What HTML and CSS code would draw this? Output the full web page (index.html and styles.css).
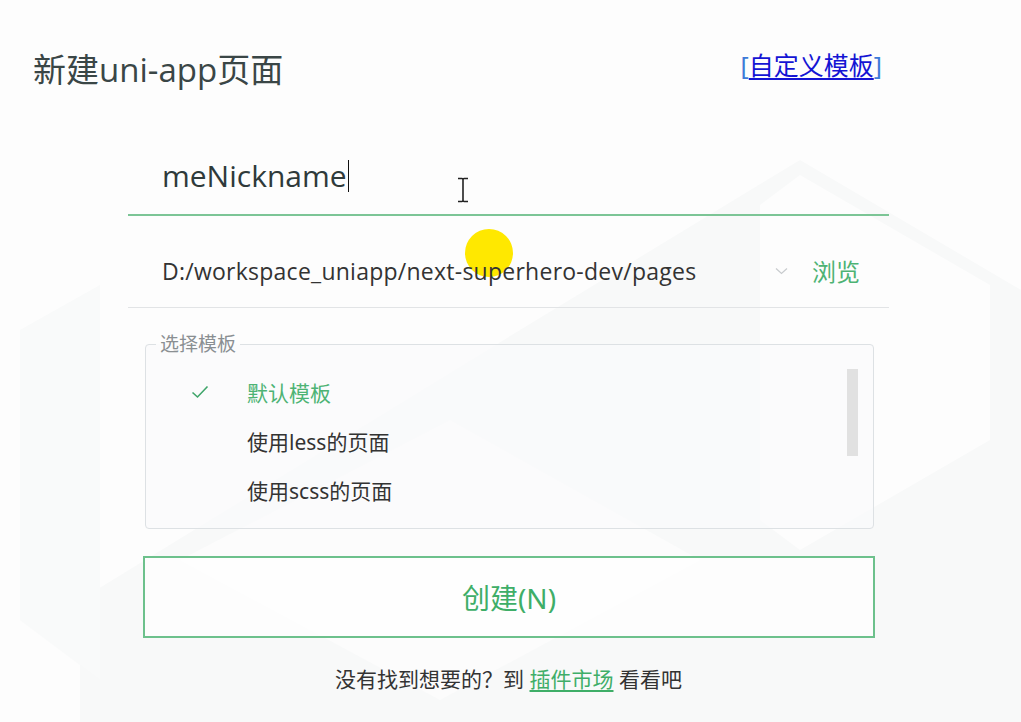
FILE: index.html
```html
<!DOCTYPE html>
<html lang="zh-CN">
<head>
<meta charset="utf-8">
<title>新建uni-app页面</title>
<link rel="stylesheet" href="styles.css">
</head>
<body>
<svg class="watermark" width="1021" height="722" viewBox="0 0 1021 722" aria-hidden="true">
  <polygon points="520,330 800,160 1021,290 1021,722 80,722 80,600" fill="#f8f9f9"/>
  <polygon points="800,175 990,285 990,440 800,550 760,520 760,205" fill="#fdfdfd"/>
  <polygon points="180,560 450,420 700,560 440,700" fill="#fcfcfc"/>
  <polygon points="20,330 100,285 100,680 20,620" fill="#f9fafa"/>
</svg>
<div class="spot"></div>
<div class="page">
  <header class="header">
    <h1 class="title">新建uni-app页面</h1>
    <a class="custom"><span class="br">[</span><span class="custom-link">自定义模板</span><span class="br">]</span></a>
  </header>

  <main class="form">
    <div class="name-row">
      <span class="name-text">meNickname</span><span class="caret"></span>
    </div>
    <div class="path-row">
      <span class="path-text">D:/workspace_uniapp/next-superhero-dev/pages</span>
      <svg class="chevron" width="13" height="8" viewBox="0 0 13 8"><path d="M1 1.5 L6.5 6.5 L12 1.5" fill="none" stroke="#c8cbce" stroke-width="1.2"/></svg>
      <span class="browse">浏览</span>
    </div>

    <fieldset class="templates">
      <legend class="legend">选择模板</legend>
      <div class="list">
        <div class="item active">
          <svg class="check" width="18" height="14" viewBox="0 0 18 14"><path d="M1.5 7.5 L6.5 12 L16.5 1.5" fill="none" stroke="#3fa56a" stroke-width="1.6"/></svg>
          <span>默认模板</span>
        </div>
        <div class="item"><span class="nocheck"></span><span>使用less的页面</span></div>
        <div class="item"><span class="nocheck"></span><span>使用scss的页面</span></div>
      </div>
      <div class="scroll-thumb"></div>
    </fieldset>

    <button class="create">创建(N)</button>

    <p class="footer">没有找到想要的？到 <a class="market">插件市场</a> 看看吧</p>
  </main>
</div>
<svg class="ibeam" width="12" height="26" viewBox="0 0 12 26" aria-hidden="true"><path d="M1 1.5 H5 Q6 1.5 6 3 V23 Q6 24.5 5 24.5 H1 M11 1.5 H7 Q6 1.5 6 3 M6 23 Q6 24.5 7 24.5 H11" fill="none" stroke="#222" stroke-width="1.6"/></svg>
</body>
</html>
```
FILE: styles.css
```css
html, body {
  margin: 0;
  padding: 0;
}
body {
  width: 1021px;
  height: 722px;
  overflow: hidden;
  background: #fdfdfd;
  position: relative;
  font-family: "Noto Sans", "Noto Sans CJK SC", sans-serif;
  color: #333;
}
.watermark {
  position: absolute;
  left: 0;
  top: 0;
  z-index: 0;
}
.spot {
  position: absolute;
  left: 465px;
  top: 229px;
  width: 48px;
  height: 48px;
  border-radius: 50%;
  background: #ffe800;
  z-index: 0;
}
.page {
  position: relative;
  z-index: 1;
}
.header {
  display: flex;
  justify-content: space-between;
  align-items: center;
  padding: 50px 139px 0 33px;
  height: 40px;
}
.title {
  margin: 0;
  font-size: 33px;
  font-weight: 400;
  color: #3a4646;
  font-family: "Open Sans", "Noto Sans CJK SC", sans-serif;
  line-height: 40px;
}
.custom {
  font-size: 25px;
  margin-top: -10px;
  line-height: 32px;
}
.br {
  color: #3d7bd8;
}
.custom-link {
  color: #1414d4;
  text-decoration: underline;
  text-underline-offset: 3px;
}
.form {
  margin-left: 128px;
  width: 761px;
}
.name-row {
  margin-top: 49px;
  height: 77px;
  box-sizing: border-box;
  border-bottom: 2px solid #7cc596;
  padding-left: 34px;
  display: flex;
  align-items: center;
  padding-bottom: 2px;
}
.name-text {
  font-size: 30px;
  color: #2f3a3a;
  font-family: "Open Sans", "Noto Sans", sans-serif;
}
.caret {
  display: inline-block;
  width: 1.5px;
  height: 32px;
  background: #111;
  margin-left: 1px;
}
.path-row {
  height: 92px;
  box-sizing: border-box;
  border-bottom: 1px solid #e2e4e6;
  display: flex;
  align-items: center;
  padding: 18px 29px 0 34px;
}
.path-text {
  flex: 1;
  font-size: 23px;
  font-family: "Open Sans", "Noto Sans", sans-serif;
  letter-spacing: 0.25px;
  color: #333;
}
.chevron {
  margin-right: 24px;
}
.browse {
  font-size: 24px;
  color: #4db374;
}
.templates {
  position: relative;
  margin: 24px 15px 0 17px;
  padding: 0;
  height: 197px;
  box-sizing: border-box;
  border: 1px solid #dde1e4;
  border-radius: 4px;
  background: rgba(250, 250, 251, 0.6);
}
.legend {
  margin-left: 10px;
  padding: 0 4px;
  font-size: 19px;
  color: #8a8f92;
  line-height: 24px;
}
.list {
  padding-top: 18px;
  padding-left: 45px;
  display: flex;
  flex-direction: column;
  gap: 13px;
}
.item {
  display: flex;
  align-items: center;
  height: 36px;
  font-size: 21px;
  color: #333;
}
.item.active {
  color: #4db374;
}
.check {
  width: 18px;
  margin-right: 38px;
}
.nocheck {
  width: 18px;
  margin-right: 38px;
}
.scroll-thumb {
  position: absolute;
  right: 15px;
  top: 13px;
  width: 11px;
  height: 87px;
  background: #e1e1e1;
}
.create {
  display: block;
  margin: 27px 0 0 15px;
  width: 732px;
  height: 82px;
  box-sizing: border-box;
  border: 2px solid #6dc18c;
  background: rgba(255, 255, 255, 0.7);
  color: #3fae68;
  font-size: 28px;
  font-family: "Noto Sans", "Noto Sans CJK SC", sans-serif;
  padding: 0;
}
.footer {
  margin: 26px 0 0 0;
  text-align: center;
  font-size: 21px;
  line-height: 30px;
  color: #333;
}
.market {
  color: #3fae68;
  text-decoration: underline;
  text-underline-offset: 3px;
}
.ibeam {
  position: absolute;
  left: 457px;
  top: 177px;
  z-index: 3;
}
```
